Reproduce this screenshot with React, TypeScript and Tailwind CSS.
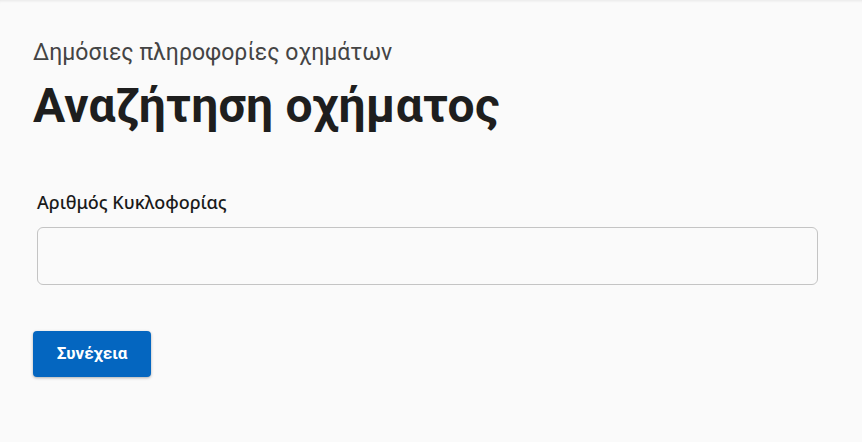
import React, { useState } from "react";

const App: React.FC = () => {
  const [plate, setPlate] = useState("");

  return (
    <div className="min-h-screen bg-[#fafafa] shadow-[inset_0_3px_3px_-2px_rgba(0,0,0,0.08)] font-['Roboto',sans-serif]">
      <div className="px-[33px] pt-[38px]">
        <p className="text-[23px] text-[#444] leading-[30px]">Δημόσιες πληροφορίες οχημάτων</p>
        <h1 className="mt-[10px] text-[48px] font-bold text-[#1e1e1e] leading-[56px] tracking-[0.2px]">
          Αναζήτηση οχήματος
        </h1>

        <form className="mt-[56px]" onSubmit={e => e.preventDefault()}>
          <label htmlFor="plate" className="block pl-[4px] text-[18px] font-medium text-[#1a1a1a] font-['Noto_Sans',sans-serif] leading-[24px]">
            Αριθμός Κυκλοφορίας
          </label>
          <input
            id="plate"
            type="text"
            value={plate}
            onChange={e => setPlate(e.target.value)}
            className="mt-[13px] ml-[4px] block w-[781px] h-[58px] rounded-[6px] border border-[#c4c4c4] bg-[#fafafa] px-3 outline-none"
          />
          <button
            type="submit"
            className="mt-[46px] w-[118px] h-[46px] rounded-[4px] bg-[#0466c0] text-white text-[17px] font-bold shadow-[0_1px_3px_rgba(0,0,0,0.3)]"
          >
            Συνέχεια
          </button>
        </form>
      </div>
    </div>
  );
};

export default App;
